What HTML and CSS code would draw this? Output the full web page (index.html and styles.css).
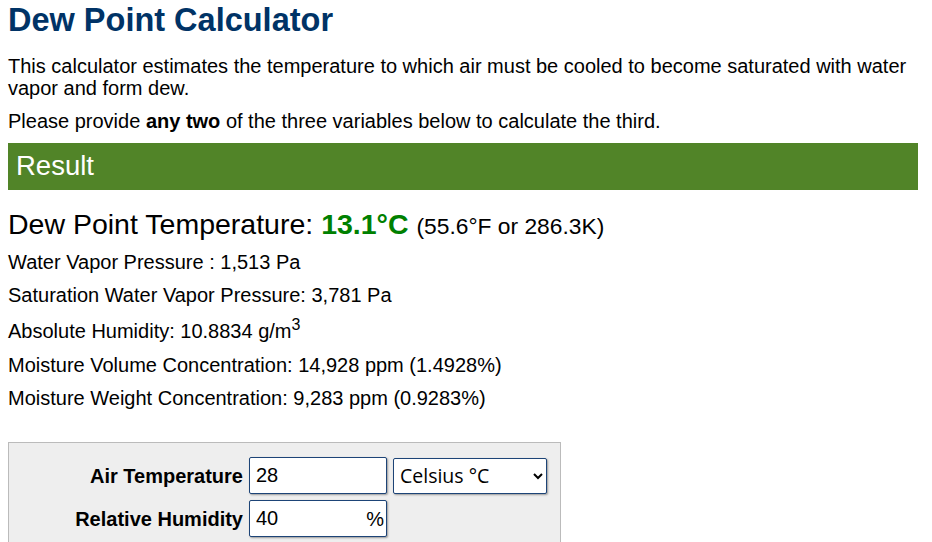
FILE: index.html
```html
<!DOCTYPE html>
<html lang="en">
<head>
    <meta charset="UTF-8">
    <meta content="width=device-width, initial-scale=1.0" name="viewport">
    <title>Dew Point Calculator</title>
    <link rel="stylesheet" href="styles.css">
</head>
<body>

<!-- Heading and intro -->
<h1>Dew Point Calculator</h1>
<p>This calculator estimates the temperature to which air must be cooled to become saturated with water vapor and form dew.</p>
<p>Please provide <b>any two</b> of the three variables below to calculate the third.</p>

<!-- Result -->
<h2 class="result-title">Result</h2>
<div class="result-main">Dew Point Temperature: <span class="dew">13.1°C</span> <span class="alt">(55.6°F or 286.3K)</span></div>
<div class="result-line">Water Vapor Pressure : 1,513 Pa</div>
<div class="result-line">Saturation Water Vapor Pressure: 3,781 Pa</div>
<div class="result-line with-sup">Absolute Humidity: 10.8834 g/m<sup>3</sup></div>
<div class="result-line">Moisture Volume Concentration: 14,928 ppm (1.4928%)</div>
<div class="result-line">Moisture Weight Concentration: 9,283 ppm (0.9283%)</div>

<!-- Input form -->
<div class="calc-form">
    <div class="form-row">
        <label for="airTemp">Air Temperature</label>
        <input id="airTemp" class="field" type="text" value="28">
        <select class="unit">
            <option>Celsius °C</option>
            <option>Fahrenheit °F</option>
            <option>Kelvin K</option>
        </select>
    </div>
    <div class="form-row">
        <label for="humidity">Relative Humidity</label>
        <span class="field-wrap">
            <input id="humidity" class="field" type="text" value="40">
            <span class="suffix">%</span>
        </span>
    </div>
</div>

</body>
</html>
```

FILE: styles.css
```css
body {
    font-family: "Liberation Sans", Arial, sans-serif;
    font-size: 20px;
    line-height: 22px;
    color: #000;
    background-color: #fff;
    margin: 0;
    padding: 0 14px 0 8px;
}
h1 {
    font-size: 32.5px;
    line-height: 38px;
    color: #003366;
    margin: 1px 0 16px 0;
}
p {
    margin: 0 0 11px 0;
}
.result-title {
    background-color: #518428;
    color: white;
    font-size: 27.5px;
    font-weight: normal;
    line-height: 32px;
    padding: 7px 8px 8px 8px;
    margin: 0 0 17px 0;
}
.result-main {
    font-size: 28.5px;
    line-height: 34px;
    margin-bottom: 8px;
}
.dew {
    color: #008000;
    font-weight: bold;
}
.alt {
    font-size: 22.8px;
}
.result-line {
    line-height: 22px;
    margin-bottom: 11px;
}
.result-line.with-sup {
    padding-top: 3px;
    margin-bottom: 12px;
}
.result-line sup {
    font-size: 16px;
    line-height: 0;
}
.calc-form {
    width: 551px;
    margin-top: 33px;
    background-color: #eee;
    border: 1px solid #bbb;
    padding: 14px 0 6px 0;
}
.form-row {
    display: flex;
    align-items: center;
    gap: 6px;
    margin-bottom: 6px;
}
.form-row label {
    width: 234px;
    text-align: right;
    font-weight: bold;
}
.field {
    width: 138px;
    height: 37px;
    box-sizing: border-box;
    padding: 0 6px;
    font-family: "Liberation Sans", Arial, sans-serif;
    font-size: 20px;
    color: #000;
    border: 1px solid #1d4477;
    border-radius: 2px;
    box-shadow: 1px 1px 2px #999;
    background: white;
}
.unit {
    width: 154px;
    height: 36px;
    font-family: "Open Sans", sans-serif;
    font-size: 19.5px;
    color: #000;
    border: 1px solid #1d4477;
    border-radius: 2px;
    box-shadow: 1px 1px 2px #999;
    background: white;
    padding: 0 2px;
}
.field-wrap {
    position: relative;
    display: inline-block;
    height: 37px;
}
.suffix {
    position: absolute;
    right: 3px;
    top: 8px;
}
```
